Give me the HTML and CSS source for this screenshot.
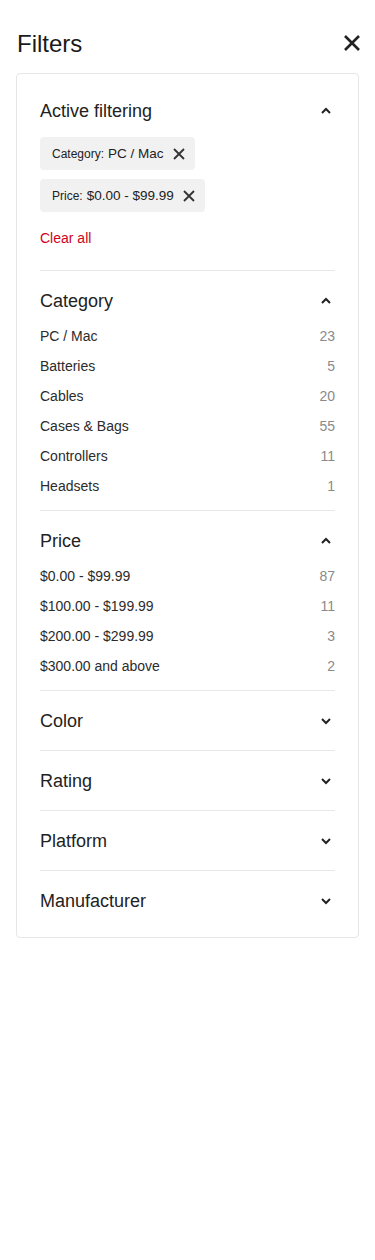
FILE: index.html
```html
<!DOCTYPE html>
<html>
<head>
<meta charset="utf-8">
<link rel="stylesheet" href="styles.css">
</head>
<body>
<div class="page">
  <div class="topbar">
    <h1 class="title">Filters</h1>
    <svg class="close" width="18" height="18" viewBox="0 0 18 18"><path d="M2 2L16 16M16 2L2 16" stroke="#222" stroke-width="2.6" stroke-linecap="butt" fill="none"/></svg>
  </div>
  <div class="card">
    <section class="sec sec-active">
      <div class="sec-head"><span>Active filtering</span><svg class="chev" viewBox="0 0 12 8"><path d="M2 6L6 2L10 6" stroke="#222" stroke-width="2" fill="none"/></svg></div>
      <div class="chips">
        <div class="chip"><span class="chip-label">Category:</span><span class="chip-val">PC / Mac</span><svg class="chip-x" viewBox="0 0 12 12"><path d="M1 1L11 11M11 1L1 11" stroke="#333" stroke-width="1.8" fill="none"/></svg></div>
        <div class="chip"><span class="chip-label">Price:</span><span class="chip-val">$0.00 - $99.99</span><svg class="chip-x" viewBox="0 0 12 12"><path d="M1 1L11 11M11 1L1 11" stroke="#333" stroke-width="1.8" fill="none"/></svg></div>
      </div>
      <div class="clear">Clear all</div>
    </section>
    <section class="sec">
      <div class="sec-head"><span>Category</span><svg class="chev" viewBox="0 0 12 8"><path d="M2 6L6 2L10 6" stroke="#222" stroke-width="2" fill="none"/></svg></div>
      <ul class="list">
        <li><span>PC / Mac</span><span class="cnt">23</span></li>
        <li><span>Batteries</span><span class="cnt">5</span></li>
        <li><span>Cables</span><span class="cnt">20</span></li>
        <li><span>Cases &amp; Bags</span><span class="cnt">55</span></li>
        <li><span>Controllers</span><span class="cnt">11</span></li>
        <li><span>Headsets</span><span class="cnt">1</span></li>
      </ul>
    </section>
    <section class="sec">
      <div class="sec-head"><span>Price</span><svg class="chev" viewBox="0 0 12 8"><path d="M2 6L6 2L10 6" stroke="#222" stroke-width="2" fill="none"/></svg></div>
      <ul class="list">
        <li><span>$0.00 - $99.99</span><span class="cnt">87</span></li>
        <li><span>$100.00 - $199.99</span><span class="cnt">11</span></li>
        <li><span>$200.00 - $299.99</span><span class="cnt">3</span></li>
        <li><span>$300.00 and above</span><span class="cnt">2</span></li>
      </ul>
    </section>
    <section class="sec sec-closed">
      <div class="sec-head"><span>Color</span><svg class="chev" viewBox="0 0 12 8"><path d="M2 2L6 6L10 2" stroke="#222" stroke-width="2" fill="none"/></svg></div>
    </section>
    <section class="sec sec-closed">
      <div class="sec-head"><span>Rating</span><svg class="chev" viewBox="0 0 12 8"><path d="M2 2L6 6L10 2" stroke="#222" stroke-width="2" fill="none"/></svg></div>
    </section>
    <section class="sec sec-closed">
      <div class="sec-head"><span>Platform</span><svg class="chev" viewBox="0 0 12 8"><path d="M2 2L6 6L10 2" stroke="#222" stroke-width="2" fill="none"/></svg></div>
    </section>
    <section class="sec sec-closed sec-last">
      <div class="sec-head"><span>Manufacturer</span><svg class="chev" viewBox="0 0 12 8"><path d="M2 2L6 6L10 2" stroke="#222" stroke-width="2" fill="none"/></svg></div>
    </section>
  </div>
</div>
</body>
</html>
```
FILE: styles.css
```css
* { box-sizing: border-box; }
body {
  margin: 0;
  background: #fff;
  font-family: "Liberation Sans", Arial, sans-serif;
  color: #222;
}
.page { padding: 0 16px; }
.topbar {
  display: flex;
  align-items: center;
  justify-content: space-between;
  padding: 30px 0 0 1px;
  height: 73px;
  align-items: flex-start;
}
.title {
  margin: 0;
  font-size: 24px;
  font-weight: 400;
  color: #1a1a1a;
  line-height: 28px;
}
.close { width: 18px; height: 18px; margin: 4px -2px 0 0; }
.card {
  border: 1px solid #e6e6e6;
  border-radius: 4px;
  padding: 0 23px;
}
.sec {
  border-top: 1px solid #e8e8e8;
  padding: 18px 0 14px;
}
.sec-active { border-top: none; padding: 25px 0 22px; }
.sec-closed { padding: 18px 0 17px; }
.sec-last { padding-bottom: 24px; }
.sec-head {
  display: flex;
  align-items: center;
  justify-content: space-between;
  font-size: 18px;
  line-height: 24px;
  color: #222;
}
.chev { width: 12px; height: 8px; margin-right: 3px; }
.chips {
  display: flex;
  flex-direction: column;
  align-items: flex-start;
  gap: 9px;
  margin-top: 14px;
}
.chip {
  display: flex;
  align-items: center;
  height: 33px;
  padding: 0 10px 0 12px;
  background: #f1f1f1;
  border-radius: 4px;
  color: #222;
}
.chip-label { font-size: 12px; margin-right: 4px; }
.chip-val { font-size: 13.5px; }
.chip-x { width: 12px; height: 12px; margin-left: 9px; }
.clear {
  margin-top: 16px;
  font-size: 14px;
  line-height: 20px;
  color: #d0021b;
}
.list {
  list-style: none;
  margin: 13px 0 0;
  padding: 0;
  display: flex;
  flex-direction: column;
  gap: 10px;
}
.list li {
  display: flex;
  justify-content: space-between;
  font-size: 14px;
  line-height: 20px;
  color: #2b2b2b;
}
.cnt { color: #8a8a8a; }
```
